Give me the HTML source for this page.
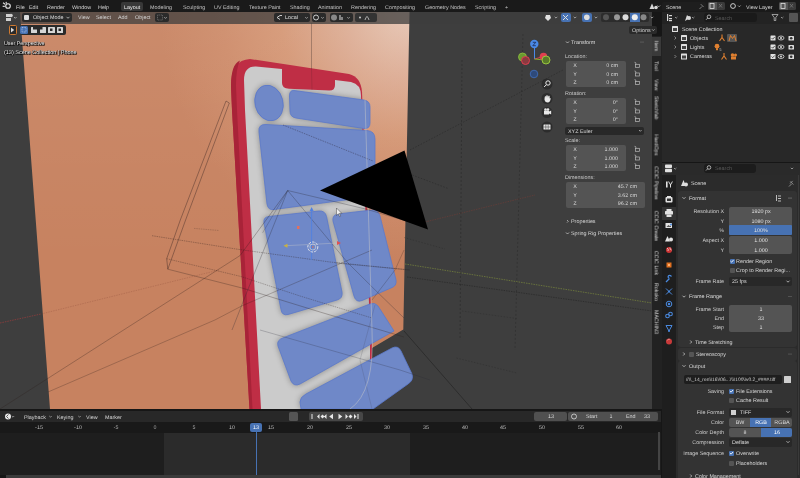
<!DOCTYPE html><html><head><meta charset="utf-8"><style>
html,body{margin:0;padding:0}
body{width:800px;height:478px;overflow:hidden;position:relative;background:#161616;font-family:"Liberation Sans",sans-serif}
.t{position:absolute;white-space:nowrap;line-height:1;will-change:transform;text-rendering:geometricPrecision}
.r{position:absolute}
svg{position:absolute;left:0;top:0}
.sh{text-shadow:0 0 1px #000,0 0 1px #000}
</style></head><body>
<div class="r" style="left:0px;top:0px;width:800px;height:12px;background:#1a1a1a;"></div>
<svg width="800" height="478" viewBox="0 0 800 478"><g fill="none" stroke="#e6e6e6" stroke-width="1.1"><circle cx="8" cy="6" r="2.3"/><path d="M5.2,4.2 L3,2.8 M4.8,6.4 L2.6,6.2 M6.5,3.6 L6,1.8"/></g></svg>
<div class="t" style="left:16px;top:8.7px;font-size:5.4px;color:#d4d4d4;transform:translate(0,-50%);">File</div>
<div class="t" style="left:29px;top:8.7px;font-size:5.4px;color:#d4d4d4;transform:translate(0,-50%);">Edit</div>
<div class="t" style="left:47px;top:8.7px;font-size:5.4px;color:#d4d4d4;transform:translate(0,-50%);">Render</div>
<div class="t" style="left:72px;top:8.7px;font-size:5.4px;color:#d4d4d4;transform:translate(0,-50%);">Window</div>
<div class="t" style="left:98px;top:8.7px;font-size:5.4px;color:#d4d4d4;transform:translate(0,-50%);">Help</div>
<div class="r" style="left:121px;top:1.5px;width:21.5px;height:9.5px;background:#383838;border-radius:2px;"></div>
<div class="t" style="left:124px;top:8.7px;font-size:5.4px;color:#ececec;transform:translate(0,-50%);">Layout</div>
<div class="t" style="left:150px;top:8.7px;font-size:5.4px;color:#c4c4c4;transform:translate(0,-50%);">Modeling</div>
<div class="t" style="left:182.5px;top:8.7px;font-size:5.4px;color:#c4c4c4;transform:translate(0,-50%);">Sculpting</div>
<div class="t" style="left:213.7px;top:8.7px;font-size:5.4px;color:#c4c4c4;transform:translate(0,-50%);">UV Editing</div>
<div class="t" style="left:248.7px;top:8.7px;font-size:5.4px;color:#c4c4c4;transform:translate(0,-50%);">Texture Paint</div>
<div class="t" style="left:290px;top:8.7px;font-size:5.4px;color:#c4c4c4;transform:translate(0,-50%);">Shading</div>
<div class="t" style="left:318px;top:8.7px;font-size:5.4px;color:#c4c4c4;transform:translate(0,-50%);">Animation</div>
<div class="t" style="left:351px;top:8.7px;font-size:5.4px;color:#c4c4c4;transform:translate(0,-50%);">Rendering</div>
<div class="t" style="left:385.3px;top:8.7px;font-size:5.4px;color:#c4c4c4;transform:translate(0,-50%);">Compositing</div>
<div class="t" style="left:425px;top:8.7px;font-size:5.4px;color:#c4c4c4;transform:translate(0,-50%);">Geometry Nodes</div>
<div class="t" style="left:474.6px;top:8.7px;font-size:5.4px;color:#c4c4c4;transform:translate(0,-50%);">Scripting</div>
<div class="t" style="left:504.5px;top:8.7px;font-size:5.4px;color:#c4c4c4;transform:translate(0,-50%);">+</div>
<svg width="800" height="478" viewBox="0 0 800 478"><g fill="#d8d8d8"><path d="M652,3.5 L654.5,9 L649.5,9 Z"/><circle cx="656" cy="7.5" r="1.8"/></g><path d="M657.5,5.5 l1.3,1.3 l1.3,-1.3" stroke="#ccc" fill="none" stroke-width="0.7"/></svg>
<div class="r" style="left:662px;top:1.5px;width:44px;height:9px;background:#1e1e1e;border-radius:2px;"></div>
<div class="t" style="left:666px;top:8.7px;font-size:5.4px;color:#d8d8d8;transform:translate(0,-50%);">Scene</div>
<svg width="800" height="478" viewBox="0 0 800 478"><path d="M699.5,9 l2.5,-2.5 m-1.2,-2.3 l2.8,2.8" stroke="#888" stroke-width="0.9" fill="none"/></svg>
<div class="r" style="left:708px;top:2px;width:8.5px;height:8px;background:#555;border-radius:1.5px 0 0 1.5px;"></div>
<div class="r" style="left:716.5px;top:2px;width:8.5px;height:8px;background:#3a3a3a;border-radius:0 1.5px 1.5px 0;"></div>
<svg width="800" height="478" viewBox="0 0 800 478"><rect x="710" y="3.5" width="4" height="5" fill="none" stroke="#e0e0e0" stroke-width="0.8"/><path d="M719,4 l3,3.5 m0,-3.5 l-3,3.5" stroke="#777" stroke-width="0.8"/></svg>
<svg width="800" height="478" viewBox="0 0 800 478"><g fill="none" stroke="#ddd" stroke-width="0.9"><circle cx="733" cy="6" r="2.4"/></g><path d="M738,5.5 l1.3,1.3 l1.3,-1.3" stroke="#ccc" fill="none" stroke-width="0.7"/></svg>
<div class="t" style="left:745.5px;top:8.7px;font-size:5.4px;color:#d8d8d8;transform:translate(0,-50%);">View Layer</div>
<div class="r" style="left:779px;top:2px;width:8.5px;height:8px;background:#555;border-radius:1.5px 0 0 1.5px;"></div>
<div class="r" style="left:787.5px;top:2px;width:8px;height:8px;background:#3a3a3a;border-radius:0 1.5px 1.5px 0;"></div>
<svg width="800" height="478" viewBox="0 0 800 478"><rect x="781" y="3.5" width="4" height="5" fill="none" stroke="#e0e0e0" stroke-width="0.8"/><path d="M790,4 l3,3.5 m0,-3.5 l-3,3.5" stroke="#777" stroke-width="0.8"/></svg>
<div class="r" style="left:0px;top:12px;width:652px;height:397px;background:#3e3e3e;"></div>
<svg width="800" height="478" viewBox="0 0 800 478"><defs><radialGradient id="og" gradientUnits="userSpaceOnUse" cx="410" cy="11" r="250"><stop offset="0" stop-color="#e6c6b4"/><stop offset="0.27" stop-color="#dcab92"/><stop offset="0.52" stop-color="#d49674"/><stop offset="0.75" stop-color="#cd8a68"/><stop offset="1" stop-color="#c78260"/></radialGradient><linearGradient id="ov" gradientUnits="userSpaceOnUse" x1="0" y1="20" x2="0" y2="260"><stop offset="0" stop-color="#fff" stop-opacity="0.07"/><stop offset="1" stop-color="#fff" stop-opacity="0"/></linearGradient><linearGradient id="wg" gradientUnits="userSpaceOnUse" x1="255" y1="120" x2="372" y2="360"><stop offset="0" stop-color="#d6d6d6"/><stop offset="0.5" stop-color="#c4c4c4"/><stop offset="1" stop-color="#a4a4a4"/></linearGradient></defs><polygon points="20,12 409.5,12 403.3,329.5 372,348 372,409 50,409" fill="url(#og)"/><polygon points="20,12 409.5,12 403.3,329.5 372,348 372,409 50,409" fill="url(#ov)"/><path d="M249.5,409 L232,110 L231,86 Q231,60 250,59 L349,74 Q361,77 362,92 L372,330 L372,409 Z" fill="#bf2e45"/><path d="M249.5,409 L232,110 L231,86 Q231,64 240,60.5 Q236,68 236,86 L237,110 L252.5,409 Z" fill="#a82338"/><defs><clipPath id="scr"><path d="M261,409 L245,110 L244,80 Q244,66 256,66.5 L282,69 L282,83 Q282,88.5 289,88.8 L329,90.5 Q335,90.8 335,85 L335,80 L351,82 Q361,84 361,96 L370,330 L370,409 Z"/></clipPath><filter id="blr" x="-20%" y="-20%" width="140%" height="140%"><feGaussianBlur stdDeviation="3.2"/></filter></defs><path d="M261,409 L245,110 L244,80 Q244,66 256,66.5 L282,69 L282,83 Q282,88.5 289,88.8 L329,90.5 Q335,90.8 335,85 L335,80 L351,82 Q361,84 361,96 L370,330 L370,409 Z" fill="#cbcbcb"/><g clip-path="url(#scr)"><g fill="#000" opacity="0.36" filter="url(#blr)"><ellipse cx="269" cy="103" rx="14" ry="18" transform="rotate(-14 269 103)"/><path d="M294,90.5 L364,100 Q370,101 370,107 L370,123 Q370,129 364,128.5 L296,118 Q290,117 290,111 L289.5,96 Q289.5,90 294,90.5 Z"/><path d="M266,124.5 L367,130.5 Q375,131 375,139 L375,196 L274,209.5 Q268,210.5 267,204 L259,132 Q258,124 266,124.5 Z"/><path d="M269,216.5 L319,211 Q325,210.5 326.5,216.5 L342,292 Q343,298.5 337,300 L288,314.5 Q282,316 281,309.5 L264,223 Q263,217 269,216.5 Z"/><path d="M338,214 L372,210 Q378,209.5 380,216 L396,280 Q397,286 391,288 L362,300.5 Q356,303 354,296 L333,221 Q332,215 338,214 Z"/><path d="M284,337.5 L370,304 Q375,302 378,306 L394,331 L300,384 Q294,387 291,381 L278,346 Q276,340 284,337.5 Z"/><path d="M306,394 L392,348 Q398,345 401,351 L412,374 Q414,380 408,384 L373,409 L301,409 L300,402 Q300,397 306,394 Z"/></g></g><g fill="#6f88c8" stroke="#5a78cc" stroke-width="0.8"><ellipse cx="269" cy="103" rx="14" ry="18" transform="rotate(-14 269 103)"/><path d="M294,90.5 L364,100 Q370,101 370,107 L370,123 Q370,129 364,128.5 L296,118 Q290,117 290,111 L289.5,96 Q289.5,90 294,90.5 Z"/><path d="M266,124.5 L367,130.5 Q375,131 375,139 L375,196 L274,209.5 Q268,210.5 267,204 L259,132 Q258,124 266,124.5 Z"/><path d="M269,216.5 L319,211 Q325,210.5 326.5,216.5 L342,292 Q343,298.5 337,300 L288,314.5 Q282,316 281,309.5 L264,223 Q263,217 269,216.5 Z"/><path d="M338,214 L372,210 Q378,209.5 380,216 L396,280 Q397,286 391,288 L362,300.5 Q356,303 354,296 L333,221 Q332,215 338,214 Z"/><path d="M284,337.5 L370,304 Q375,302 378,306 L394,331 L300,384 Q294,387 291,381 L278,346 Q276,340 284,337.5 Z"/><path d="M306,394 L392,348 Q398,345 401,351 L412,374 Q414,380 408,384 L373,409 L301,409 L300,402 Q300,397 306,394 Z"/></g><path d="M311.5,23 L311.5,69" stroke="rgba(40,30,30,0.5)" stroke-width="0.6" fill="none"/><path d="M311.5,69 L312,90" stroke="rgba(40,30,30,0.25)" stroke-width="0.6" fill="none"/><path d="M180.3,220 L166.7,258.7 L167.8,269.2 L185.6,220" stroke="rgba(45,30,28,0.55)" stroke-width="0.7" fill="none"/><path d="M226,101 L180.3,220" stroke="rgba(45,30,28,0.55)" stroke-width="0.7" fill="none"/><path d="M229.3,103 L185.6,220" stroke="rgba(45,30,28,0.55)" stroke-width="0.7" fill="none"/><path d="M226,101 L229.3,103" stroke="rgba(45,30,28,0.55)" stroke-width="0.7" fill="none"/><path d="M166.7,258.7 L241,276.5 L300,296 L372,318" stroke="rgba(45,30,28,0.5)" stroke-width="0.6" fill="none" stroke-dasharray="1.5,0.8"/><path d="M167.8,269.2 L242,288 L320,312 L404,337" stroke="rgba(45,30,28,0.5)" stroke-width="0.6" fill="none"/><path d="M152,235.7 L238,249.3 L330,262 L410,270" stroke="rgba(45,30,28,0.55)" stroke-width="0.6" fill="none" stroke-dasharray="1.5,0.8"/><path d="M194,228.4 L219,230.5" stroke="rgba(45,30,28,0.35)" stroke-width="0.6" fill="none" stroke-dasharray="1.5,0.8"/><path d="M0,409 L240,255.6 L287.7,190.5" stroke="rgba(45,30,28,0.5)" stroke-width="0.6" fill="none"/><path d="M214.9,320 L242,305.8 L372,250" stroke="rgba(45,30,28,0.45)" stroke-width="0.6" fill="none"/><path d="M48,392 L214.9,320" stroke="rgba(45,30,28,0.45)" stroke-width="0.6" fill="none"/><path d="M287.7,190.5 L247.5,290.5 L232,330" stroke="rgba(40,40,50,0.5)" stroke-width="0.6" fill="none"/><path d="M287.7,190.5 L348,263 L375.7,290.5 L404,318" stroke="rgba(40,40,50,0.5)" stroke-width="0.6" fill="none"/><path d="M287.7,190.5 L365.6,209 L410,222" stroke="rgba(40,40,50,0.5)" stroke-width="0.6" fill="none"/><path d="M262.6,232.8 L287.7,190.5" stroke="rgba(40,40,50,0.4)" stroke-width="0.6" fill="none"/><path d="M335.5,263 L410,270" stroke="rgba(40,40,50,0.4)" stroke-width="0.6" fill="none"/><path d="M283,125 L373,161" stroke="rgba(45,40,60,0.5)" stroke-width="0.8" fill="none" stroke-dasharray="1.5,1"/><path d="M0,323 L41,314" stroke="rgba(200,60,60,0.6)" stroke-width="0.8" fill="none" stroke-dasharray="1.5,1"/><path d="M41,314 L219,270" stroke="rgba(110,50,40,0.35)" stroke-width="0.6" fill="none" stroke-dasharray="1.5,1"/><path d="M425,222 L535,195" stroke="rgba(150,60,50,0.5)" stroke-width="0.7" fill="none" stroke-dasharray="1.5,1"/><path d="M405,264 L652,303" stroke="rgba(150,170,60,0.6)" stroke-width="0.8" fill="none" stroke-dasharray="1.5,1"/><path d="M407,277 L652,311" stroke="rgba(20,20,20,0.55)" stroke-width="0.7" fill="none" stroke-dasharray="1.5,1"/><path d="M462,60 L460,340" stroke="rgba(25,25,25,0.5)" stroke-width="0.7" fill="none" stroke-dasharray="2,2"/><path d="M523,34 L515,350" stroke="rgba(25,25,25,0.4)" stroke-width="0.7" fill="none" stroke-dasharray="2,2"/><path d="M410,150 L563,70" stroke="rgba(25,25,25,0.5)" stroke-width="0.7" fill="none" stroke-dasharray="1.5,1.5"/><path d="M409.6,174 L448,188.5" stroke="rgba(25,25,25,0.5)" stroke-width="0.7" fill="none" stroke-dasharray="1.5,1.5"/><path d="M404,331 L472,409" stroke="rgba(25,25,25,0.6)" stroke-width="0.8" fill="none"/><path d="M404,237.5 L445,249" stroke="rgba(25,25,25,0.4)" stroke-width="0.6" fill="none" stroke-dasharray="1.5,1.5"/><path d="M456.5,358 L516.8,373" stroke="rgba(25,25,25,0.4)" stroke-width="0.6" fill="none" stroke-dasharray="1.5,1.5"/><path d="M462,311 L516.8,318.5" stroke="rgba(25,25,25,0.35)" stroke-width="0.6" fill="none" stroke-dasharray="1.5,1.5"/><path d="M260,330 L400,370 L430,380" stroke="rgba(40,40,50,0.4)" stroke-width="0.6" fill="none"/><path d="M372,300 L395,270 L404,250" stroke="rgba(40,30,30,0.4)" stroke-width="0.6" fill="none"/><path d="M375,305 L360,360 L372,409" stroke="rgba(60,60,80,0.3)" stroke-width="0.6" fill="none"/><path d="M365,100 L372,330 Q375,392 350,409" stroke="#c8c8c8" stroke-width="0.7" fill="none" opacity="0.7"/><polygon points="320,190.5 404.5,150.5 428,229.5" fill="#000"/></svg>
<svg width="800" height="478" viewBox="0 0 800 478"><g><line x1="534.5" y1="59" x2="534.5" y2="47" stroke="#4a8ae8" stroke-width="1"/><line x1="534.5" y1="59" x2="542" y2="57" stroke="#e04050" stroke-width="1"/><line x1="534.5" y1="59" x2="545" y2="60" stroke="#80b030" stroke-width="1"/><circle cx="522.5" cy="57" r="4" fill="#6a9a30" stroke="#90c040" stroke-width="0.8"/><circle cx="525.5" cy="60.5" r="4" fill="#8a3a40" stroke="#e04050" stroke-width="1"/><circle cx="543.5" cy="56.5" r="3.8" fill="#e04050"/><circle cx="546" cy="60" r="4" fill="#5a7a2a" stroke="#a0d040" stroke-width="0.9"/><circle cx="534" cy="74" r="3.8" fill="#2e4a7a" stroke="#4070c0" stroke-width="0.8"/><circle cx="534.3" cy="44" r="4.2" fill="#4a8ae8"/><path d="M532.8,42.3 h3 l-3,3.4 h3" stroke="#1a2a50" stroke-width="0.8" fill="none"/></g></svg>
<svg width="800" height="478" viewBox="0 0 800 478"><circle cx="547" cy="84" r="5.5" fill="rgba(30,30,30,0.55)"/></svg>
<svg width="800" height="478" viewBox="0 0 800 478"><circle cx="547" cy="98.5" r="5.5" fill="rgba(30,30,30,0.55)"/></svg>
<svg width="800" height="478" viewBox="0 0 800 478"><circle cx="547" cy="112.5" r="5.5" fill="rgba(30,30,30,0.55)"/></svg>
<svg width="800" height="478" viewBox="0 0 800 478"><circle cx="547" cy="127" r="5.5" fill="rgba(30,30,30,0.55)"/></svg>
<svg width="800" height="478" viewBox="0 0 800 478"><g stroke="#e8e8e8" fill="none" stroke-width="1"><circle cx="548" cy="83" r="2.2"/><path d="M546.3,84.8 l-2.2,2.2"/></g></svg>
<svg width="800" height="478" viewBox="0 0 800 478"><path d="M544.5,100 q0,-4 1,-4 q0.5,0 0.5,2 q0,-3 1,-3 q1,0 1,3 q0,-2.5 1,-2.5 q1,0 0.7,3 q0.5,-1 1,0 q-0.5,4 -3,4 q-2.5,0 -3.2,-2.5z" fill="#e8e8e8"/></svg>
<svg width="800" height="478" viewBox="0 0 800 478"><g fill="#e8e8e8"><rect x="544" y="110.5" width="5" height="4" rx="0.6"/><circle cx="545.5" cy="109.5" r="1.3"/><circle cx="548" cy="109.5" r="1.3"/><path d="M549,111.5 l2.2,-1 v4 l-2.2,-1z"/></g></svg>
<svg width="800" height="478" viewBox="0 0 800 478"><g fill="#e8e8e8"><rect x="543.5" y="124.5" width="7" height="5" rx="0.5"/></g><g stroke="#333" stroke-width="0.5"><line x1="545.8" y1="124.5" x2="545.8" y2="129.5"/><line x1="548.2" y1="124.5" x2="548.2" y2="129.5"/><line x1="543.5" y1="127" x2="550.5" y2="127"/></g></svg>
<svg width="800" height="478" viewBox="0 0 800 478"><g><line x1="311.6" y1="210" x2="311.6" y2="260" stroke="#5080e0" stroke-width="0.9"/><line x1="286" y1="245.7" x2="338" y2="243" stroke="rgba(200,200,200,0.55)" stroke-width="0.7"/><path d="M311.6,207 l-2,4 h4z" fill="#5080e0"/><path d="M283.5,245.8 l4,-2 v4z" fill="#c8b040"/><path d="M341,243 l-4,-2 v4z" fill="#e05050"/><rect x="297" y="226" width="2.5" height="3" fill="#e07060"/><circle cx="312.8" cy="247" r="5" fill="none" stroke="#eee" stroke-width="0.9" stroke-dasharray="2.5,1.2"/><circle cx="312.8" cy="247" r="3" fill="none" stroke="#ddd" stroke-width="0.6"/><circle cx="312.8" cy="247" r="0.8" fill="#e07050"/></g></svg>
<svg width="800" height="478" viewBox="0 0 800 478"><path d="M336.5,208 v7.5 l1.8,-1.7 l1.3,2.8 l1,-0.5 l-1.3,-2.7 h2.5z" fill="#f0f0f0" stroke="#222" stroke-width="0.4"/></svg>
<div class="r" style="left:0px;top:12px;width:652px;height:12px;background:rgba(62,62,62,0.75);"></div>
<svg width="800" height="478" viewBox="0 0 800 478"><g fill="#d0d0d0"><rect x="6" y="14" width="4" height="3"/><circle cx="11" cy="15.5" r="1.8"/><rect x="6" y="18" width="5" height="3"/></g><path d="M14,17 l1.3,1.3 l1.3,-1.3" stroke="#ccc" fill="none" stroke-width="0.7"/></svg>
<div class="r" style="left:21.5px;top:12.5px;width:50px;height:9.5px;background:#2a2a2a;border-radius:2px;"></div>
<div class="r" style="left:24px;top:14.5px;width:5px;height:5px;background:#dcdcdc;border-radius:1px;"></div>
<div class="t" style="left:32.5px;top:19.4px;font-size:5.4px;color:#dedede;transform:translate(0,-50%);">Object Mode</div>
<svg width="800" height="478" viewBox="0 0 800 478"><path d="M66.5,16.8 l1.5,1.5 l1.5,-1.5" stroke="#ccc" fill="none" stroke-width="0.8"/></svg>
<div class="t" style="left:77.6px;top:19.4px;font-size:5.4px;color:#d6d6d6;transform:translate(0,-50%);">View</div>
<div class="t" style="left:96.3px;top:19.4px;font-size:5.4px;color:#d6d6d6;transform:translate(0,-50%);">Select</div>
<div class="t" style="left:118.4px;top:19.4px;font-size:5.4px;color:#d6d6d6;transform:translate(0,-50%);">Add</div>
<div class="t" style="left:135px;top:19.4px;font-size:5.4px;color:#d6d6d6;transform:translate(0,-50%);">Object</div>
<div class="r" style="left:155px;top:12.5px;width:13.5px;height:9.5px;background:#2a2a2a;border-radius:2px;"></div>
<div class="r" style="left:274px;top:12.5px;width:35.5px;height:9.5px;background:#2a2a2a;border-radius:2px;"></div>
<svg width="800" height="478" viewBox="0 0 800 478"><g stroke="#ddd" stroke-width="0.9" fill="none"><path d="M277,17.5 l3,-2 m-3,2 l3,2 M280,15.5 l2,0"/></g></svg>
<div class="t" style="left:284.5px;top:19.4px;font-size:5.4px;color:#e0e0e0;transform:translate(0,-50%);">Local</div>
<div class="r" style="left:311.5px;top:12.5px;width:14.5px;height:9.5px;background:#2a2a2a;border-radius:2px;"></div>
<svg width="800" height="478" viewBox="0 0 800 478"><circle cx="316" cy="17.5" r="2.5" stroke="#ddd" stroke-width="0.9" fill="none"/></svg>
<div class="r" style="left:329.5px;top:12.5px;width:23px;height:9.5px;background:#2a2a2a;border-radius:2px;"></div>
<svg width="800" height="478" viewBox="0 0 800 478"><circle cx="334" cy="17.5" r="3" fill="#888"/><path d="M340,20 l0,-5 m2,5 l0,-3" stroke="#ddd" stroke-width="1"/></svg>
<div class="r" style="left:355px;top:12.5px;width:22px;height:9.5px;background:#333;border-radius:2px;"></div>
<svg width="800" height="478" viewBox="0 0 800 478"><path d="M305.3,17.2 l1.2,1.2 l1.2,-1.2" stroke="#ccc" fill="none" stroke-width="0.7"/></svg>
<svg width="800" height="478" viewBox="0 0 800 478"><path d="M321.3,17.2 l1.2,1.2 l1.2,-1.2" stroke="#ccc" fill="none" stroke-width="0.7"/></svg>
<svg width="800" height="478" viewBox="0 0 800 478"><path d="M347.3,17.2 l1.2,1.2 l1.2,-1.2" stroke="#ccc" fill="none" stroke-width="0.7"/></svg>
<svg width="800" height="478" viewBox="0 0 800 478"><path d="M164.3,17.2 l1.2,1.2 l1.2,-1.2" stroke="#ccc" fill="none" stroke-width="0.7"/></svg>
<svg width="800" height="478" viewBox="0 0 800 478"><rect x="157.5" y="15" width="5" height="5" fill="none" stroke="#888" stroke-width="0.6" stroke-dasharray="1,0.7"/></svg>
<svg width="800" height="478" viewBox="0 0 800 478"><circle cx="360" cy="17.5" r="1" fill="#ccc"/><path d="M365,20 q2,-7 4,0" stroke="#ccc" stroke-width="0.8" fill="none"/></svg>
<svg width="800" height="478" viewBox="0 0 800 478"><g fill="#e0e0e0"><path d="M546,15 l4,0 l1,3 l-3,3 l-3,-3 z"/></g></svg>
<div class="r" style="left:561px;top:12.5px;width:9.5px;height:9.5px;background:#4772b3;border-radius:2px;"></div>
<svg width="800" height="478" viewBox="0 0 800 478"><path d="M563,20 l5,-5 m-5,0 l5,5" stroke="#ddd" stroke-width="1"/></svg>
<div class="r" style="left:582px;top:12.5px;width:9.5px;height:9.5px;background:#4772b3;border-radius:2px;"></div>
<svg width="800" height="478" viewBox="0 0 800 478"><circle cx="586.8" cy="17.3" r="2.8" fill="#ddd"/></svg>
<svg width="800" height="478" viewBox="0 0 800 478"><path d="M554.7,16.8 l1.3,1.3 l1.3,-1.3" stroke="#ccc" fill="none" stroke-width="0.7"/></svg>
<svg width="800" height="478" viewBox="0 0 800 478"><path d="M573.7,16.8 l1.3,1.3 l1.3,-1.3" stroke="#ccc" fill="none" stroke-width="0.7"/></svg>
<svg width="800" height="478" viewBox="0 0 800 478"><path d="M594.7,16.8 l1.3,1.3 l1.3,-1.3" stroke="#ccc" fill="none" stroke-width="0.7"/></svg>
<svg width="800" height="478" viewBox="0 0 800 478"><path d="M650.7,16.8 l1.3,1.3 l1.3,-1.3" stroke="#ccc" fill="none" stroke-width="0.7"/></svg>
<div class="r" style="left:601px;top:12.5px;width:48px;height:9.5px;background:#2c2c2c;border-radius:2px;"></div>
<svg width="800" height="478" viewBox="0 0 800 478"><circle cx="606" cy="17.3" r="3" fill="#555"/><circle cx="617" cy="17.3" r="3" fill="#999"/><circle cx="625.5" cy="17.3" r="3" fill="#ddd"/></svg>
<div class="r" style="left:630px;top:12.5px;width:9.5px;height:9.5px;background:#4772b3;"></div>
<svg width="800" height="478" viewBox="0 0 800 478"><circle cx="634.8" cy="17.3" r="3" fill="#eee"/><circle cx="643.5" cy="17.3" r="3" fill="#888"/></svg>
<div class="r" style="left:8.5px;top:25px;width:8px;height:9.5px;background:#2a2a2a;border:1px solid #d07a30;border-radius:1.5px;box-sizing:border-box;"></div>
<svg width="800" height="478" viewBox="0 0 800 478"><path d="M11,27.5 l0,5 l3.2,-2.5 z" fill="#ddd"/></svg>
<div class="r" style="left:19.5px;top:25px;width:46px;height:9.5px;background:#2a2a2a;border-radius:2px;"></div>
<div class="r" style="left:20px;top:25.5px;width:8px;height:8.5px;background:#4772b3;border-radius:1.5px;"></div>
<svg width="800" height="478" viewBox="0 0 800 478"><rect x="22" y="27.5" width="4" height="4.5" fill="none" stroke="#cfd8f0" stroke-width="0.6" stroke-dasharray="1,0.6"/></svg>
<div class="r" style="left:30.5px;top:26.5px;width:6.5px;height:6.5px;background:#d6d6d6;border-radius:0.5px;"></div>
<div class="r" style="left:39.5px;top:26.5px;width:6.5px;height:6.5px;background:#d6d6d6;border-radius:0.5px;"></div>
<div class="r" style="left:48px;top:26.5px;width:6.5px;height:6.5px;background:#d6d6d6;border-radius:0.5px;"></div>
<div class="r" style="left:56.5px;top:26.5px;width:6.5px;height:6.5px;background:#d6d6d6;border-radius:0.5px;"></div>
<svg width="800" height="478" viewBox="0 0 800 478"><g fill="#2a2a2a"><rect x="33" y="26.5" width="4" height="3"/><rect x="39.5" y="26.5" width="3" height="3"/><rect x="50" y="28.5" width="2.5" height="2.5"/><rect x="58.5" y="28.5" width="2.5" height="2.5"/></g></svg>
<div class="t" style="left:4.4px;top:45.199999999999996px;font-size:5.33px;color:#f8f8f8;transform:translate(0,-50%);text-shadow:0.7px 0.7px 0.4px #000,-0.5px -0.3px 0.4px #000,0.5px -0.4px 0.4px #222,-0.4px 0.6px 0.4px #222;">User Perspective</div>
<div class="t" style="left:4.4px;top:53.5px;font-size:5.47px;color:#f8f8f8;transform:translate(0,-50%);text-shadow:0.7px 0.7px 0.4px #000,-0.5px -0.3px 0.4px #000,0.5px -0.4px 0.4px #222,-0.4px 0.6px 0.4px #222;">(13) Scene Collection | Phone</div>
<div class="r" style="left:628.5px;top:25.8px;width:28.5px;height:8.5px;background:#2a2a2a;border-radius:2px;"></div>
<div class="t" style="left:631.5px;top:31.9px;font-size:5.4px;color:#d8d8d8;transform:translate(0,-50%);">Options</div>
<svg width="800" height="478" viewBox="0 0 800 478"><path d="M652,29.3 l1.3,1.3 l1.3,-1.3" stroke="#ccc" fill="none" stroke-width="0.7"/></svg>
<svg width="800" height="478" viewBox="0 0 800 478"><path d="M566,41.5 l1.5,1.5 l1.5,-1.5" stroke="#ccc" fill="none" stroke-width="0.8"/></svg>
<div class="t" style="left:571px;top:44.199999999999996px;font-size:5.4px;color:#dcdcdc;transform:translate(0,-50%);">Transform</div>
<svg width="800" height="478" viewBox="0 0 800 478"><g fill="#888"><circle cx="641" cy="42" r="0.5"/><circle cx="643" cy="42" r="0.5"/></g></svg>
<div class="t" style="left:565px;top:57.6px;font-size:5.4px;color:#c8c8c8;transform:translate(0,-50%);">Location:</div>
<div class="r" style="left:565.5px;top:61px;width:60px;height:25.799999999999997px;background:#545454;border-radius:2px;"></div>
<div class="t" style="left:574.5px;top:67.2px;font-size:5.4px;color:#d8d8d8;transform:translate(-50%,-50%);">X</div>
<div class="t" style="left:618px;top:67.2px;font-size:5.4px;color:#dcdcdc;transform:translate(-100%,-50%);">0 cm</div>
<div class="t" style="left:574.5px;top:75.8px;font-size:5.4px;color:#d8d8d8;transform:translate(-50%,-50%);">Y</div>
<div class="t" style="left:618px;top:75.8px;font-size:5.4px;color:#dcdcdc;transform:translate(-100%,-50%);">0 cm</div>
<div class="t" style="left:574.5px;top:84.4px;font-size:5.4px;color:#d8d8d8;transform:translate(-50%,-50%);">Z</div>
<div class="t" style="left:618px;top:84.4px;font-size:5.4px;color:#dcdcdc;transform:translate(-100%,-50%);">0 cm</div>
<div class="t" style="left:565px;top:94.9px;font-size:5.4px;color:#c8c8c8;transform:translate(0,-50%);">Rotation:</div>
<div class="r" style="left:565.5px;top:98px;width:60px;height:25.799999999999997px;background:#545454;border-radius:2px;"></div>
<div class="t" style="left:574.5px;top:104.2px;font-size:5.4px;color:#d8d8d8;transform:translate(-50%,-50%);">X</div>
<div class="t" style="left:618px;top:104.2px;font-size:5.4px;color:#dcdcdc;transform:translate(-100%,-50%);">0°</div>
<div class="t" style="left:574.5px;top:112.8px;font-size:5.4px;color:#d8d8d8;transform:translate(-50%,-50%);">Y</div>
<div class="t" style="left:618px;top:112.8px;font-size:5.4px;color:#dcdcdc;transform:translate(-100%,-50%);">0°</div>
<div class="t" style="left:574.5px;top:121.4px;font-size:5.4px;color:#d8d8d8;transform:translate(-50%,-50%);">Z</div>
<div class="t" style="left:618px;top:121.4px;font-size:5.4px;color:#dcdcdc;transform:translate(-100%,-50%);">0°</div>
<div class="r" style="left:565px;top:127px;width:79px;height:7.5px;background:#282828;border-radius:2px;"></div>
<div class="t" style="left:568px;top:132.6px;font-size:5.4px;color:#d8d8d8;transform:translate(0,-50%);">XYZ Euler</div>
<svg width="800" height="478" viewBox="0 0 800 478"><path d="M639,130 l1.3,1.3 l1.3,-1.3" stroke="#ccc" fill="none" stroke-width="0.7"/></svg>
<div class="t" style="left:565px;top:141.9px;font-size:5.4px;color:#c8c8c8;transform:translate(0,-50%);">Scale:</div>
<div class="r" style="left:565.5px;top:145px;width:60px;height:25.799999999999997px;background:#545454;border-radius:2px;"></div>
<div class="t" style="left:574.5px;top:151.20000000000002px;font-size:5.4px;color:#d8d8d8;transform:translate(-50%,-50%);">X</div>
<div class="t" style="left:618px;top:151.20000000000002px;font-size:5.4px;color:#dcdcdc;transform:translate(-100%,-50%);">1.000</div>
<div class="t" style="left:574.5px;top:159.8px;font-size:5.4px;color:#d8d8d8;transform:translate(-50%,-50%);">Y</div>
<div class="t" style="left:618px;top:159.8px;font-size:5.4px;color:#dcdcdc;transform:translate(-100%,-50%);">1.000</div>
<div class="t" style="left:574.5px;top:168.4px;font-size:5.4px;color:#d8d8d8;transform:translate(-50%,-50%);">Z</div>
<div class="t" style="left:618px;top:168.4px;font-size:5.4px;color:#dcdcdc;transform:translate(-100%,-50%);">1.000</div>
<div class="t" style="left:565px;top:178.9px;font-size:5.4px;color:#c8c8c8;transform:translate(0,-50%);">Dimensions:</div>
<div class="r" style="left:565.5px;top:182px;width:79px;height:25.799999999999997px;background:#545454;border-radius:2px;"></div>
<div class="t" style="left:574.5px;top:188.20000000000002px;font-size:5.4px;color:#d8d8d8;transform:translate(-50%,-50%);">X</div>
<div class="t" style="left:637px;top:188.20000000000002px;font-size:5.4px;color:#dcdcdc;transform:translate(-100%,-50%);">45.7 cm</div>
<div class="t" style="left:574.5px;top:196.8px;font-size:5.4px;color:#d8d8d8;transform:translate(-50%,-50%);">Y</div>
<div class="t" style="left:637px;top:196.8px;font-size:5.4px;color:#dcdcdc;transform:translate(-100%,-50%);">3.62 cm</div>
<div class="t" style="left:574.5px;top:205.4px;font-size:5.4px;color:#d8d8d8;transform:translate(-50%,-50%);">Z</div>
<div class="t" style="left:637px;top:205.4px;font-size:5.4px;color:#dcdcdc;transform:translate(-100%,-50%);">96.2 cm</div>
<svg width="800" height="478" viewBox="0 0 800 478"><g stroke="#bbb" stroke-width="0.7" fill="none"><rect x="635.5" y="64.3" width="4" height="3"/><path d="M636,64.3 q0,-2.5 -1.5,-2"/></g></svg>
<svg width="800" height="478" viewBox="0 0 800 478"><g stroke="#bbb" stroke-width="0.7" fill="none"><rect x="635.5" y="73" width="4" height="3"/><path d="M636,73 q0,-2.5 -1.5,-2"/></g></svg>
<svg width="800" height="478" viewBox="0 0 800 478"><g stroke="#bbb" stroke-width="0.7" fill="none"><rect x="635.5" y="81.6" width="4" height="3"/><path d="M636,81.6 q0,-2.5 -1.5,-2"/></g></svg>
<svg width="800" height="478" viewBox="0 0 800 478"><g stroke="#bbb" stroke-width="0.7" fill="none"><rect x="635.5" y="101.3" width="4" height="3"/><path d="M636,101.3 q0,-2.5 -1.5,-2"/></g></svg>
<svg width="800" height="478" viewBox="0 0 800 478"><g stroke="#bbb" stroke-width="0.7" fill="none"><rect x="635.5" y="110" width="4" height="3"/><path d="M636,110 q0,-2.5 -1.5,-2"/></g></svg>
<svg width="800" height="478" viewBox="0 0 800 478"><g stroke="#bbb" stroke-width="0.7" fill="none"><rect x="635.5" y="118.6" width="4" height="3"/><path d="M636,118.6 q0,-2.5 -1.5,-2"/></g></svg>
<svg width="800" height="478" viewBox="0 0 800 478"><g stroke="#bbb" stroke-width="0.7" fill="none"><rect x="635.5" y="148.3" width="4" height="3"/><path d="M636,148.3 q0,-2.5 -1.5,-2"/></g></svg>
<svg width="800" height="478" viewBox="0 0 800 478"><g stroke="#bbb" stroke-width="0.7" fill="none"><rect x="635.5" y="157" width="4" height="3"/><path d="M636,157 q0,-2.5 -1.5,-2"/></g></svg>
<svg width="800" height="478" viewBox="0 0 800 478"><g stroke="#bbb" stroke-width="0.7" fill="none"><rect x="635.5" y="165.6" width="4" height="3"/><path d="M636,165.6 q0,-2.5 -1.5,-2"/></g></svg>
<svg width="800" height="478" viewBox="0 0 800 478"><path d="M567,220 l1.3,1.3 l-1.3,1.3" stroke="#ccc" fill="none" stroke-width="0.7"/></svg>
<div class="t" style="left:571px;top:223.4px;font-size:5.4px;color:#d8d8d8;transform:translate(0,-50%);">Properties</div>
<svg width="800" height="478" viewBox="0 0 800 478"><path d="M566,232.5 l1.5,1.5 l1.5,-1.5" stroke="#ccc" fill="none" stroke-width="0.8"/></svg>
<div class="t" style="left:571px;top:235.4px;font-size:5.4px;color:#d8d8d8;transform:translate(0,-50%);">Spring Rig Properties</div>
<div class="r" style="left:652px;top:36px;width:9.5px;height:373px;background:#222222;"></div>
<div class="r" style="left:652px;top:36.7px;width:9px;height:19.5px;background:#3a3a3a;"></div>
<div class="t" style="left:655px;top:46.0px;font-size:5.3px;color:#dcdcdc;transform:translate(-50%,-50%) rotate(90deg)">Item</div>
<div class="t" style="left:655px;top:65.6px;font-size:5.3px;color:#dcdcdc;transform:translate(-50%,-50%) rotate(90deg)">Tool</div>
<div class="t" style="left:655px;top:85.0px;font-size:5.3px;color:#dcdcdc;transform:translate(-50%,-50%) rotate(90deg)">View</div>
<div class="t" style="left:655px;top:108.0px;font-size:5.3px;color:#dcdcdc;transform:translate(-50%,-50%) rotate(90deg)">Sketchfab</div>
<div class="t" style="left:655px;top:144.6px;font-size:5.3px;color:#dcdcdc;transform:translate(-50%,-50%) rotate(90deg)">HardOps</div>
<div class="t" style="left:655px;top:183.0px;font-size:5.3px;color:#dcdcdc;transform:translate(-50%,-50%) rotate(90deg)">CCIC Pipeline</div>
<div class="t" style="left:655px;top:226.0px;font-size:5.3px;color:#dcdcdc;transform:translate(-50%,-50%) rotate(90deg)">CCIC Create</div>
<div class="t" style="left:655px;top:262.5px;font-size:5.3px;color:#dcdcdc;transform:translate(-50%,-50%) rotate(90deg)">CCIC Link</div>
<div class="t" style="left:655px;top:291.5px;font-size:5.3px;color:#dcdcdc;transform:translate(-50%,-50%) rotate(90deg)">Rokoko</div>
<div class="t" style="left:655px;top:322.0px;font-size:5.3px;color:#dcdcdc;transform:translate(-50%,-50%) rotate(90deg)">MACHIN3</div>
<div class="r" style="left:0px;top:409px;width:661px;height:69px;background:#161616;"></div>
<div class="r" style="left:0px;top:411px;width:661px;height:11px;background:#282828;"></div>
<div class="r" style="left:0px;top:422px;width:661px;height:10.5px;background:#191919;"></div>
<div class="r" style="left:0px;top:432.5px;width:661px;height:42px;background:#1e1e1e;"></div>
<div class="r" style="left:164px;top:432.5px;width:246px;height:42px;background:#2b2b2b;"></div>
<div class="r" style="left:6px;top:474.5px;width:655px;height:3.5px;background:#3b3b3b;"></div>
<svg width="800" height="478" viewBox="0 0 800 478"><circle cx="8" cy="416.5" r="3" fill="#e6e6e6"/><path d="M8.5,414.5 l-2,2 l2,2" stroke="#333" stroke-width="0.8" fill="none"/></svg>
<div class="t" style="left:24px;top:418.9px;font-size:5.4px;color:#d6d6d6;transform:translate(0,-50%);">Playback</div>
<div class="t" style="left:57px;top:418.9px;font-size:5.4px;color:#d6d6d6;transform:translate(0,-50%);">Keying</div>
<div class="t" style="left:86px;top:418.9px;font-size:5.4px;color:#d6d6d6;transform:translate(0,-50%);">View</div>
<div class="t" style="left:105px;top:418.9px;font-size:5.4px;color:#d6d6d6;transform:translate(0,-50%);">Marker</div>
<svg width="800" height="478" viewBox="0 0 800 478"><path d="M11.8,416 l1.2,1.2 l1.2,-1.2" stroke="#bbb" fill="none" stroke-width="0.7"/></svg>
<svg width="800" height="478" viewBox="0 0 800 478"><path d="M49.3,416 l1.2,1.2 l1.2,-1.2" stroke="#bbb" fill="none" stroke-width="0.7"/></svg>
<svg width="800" height="478" viewBox="0 0 800 478"><path d="M78.3,416 l1.2,1.2 l1.2,-1.2" stroke="#bbb" fill="none" stroke-width="0.7"/></svg>
<div class="r" style="left:289px;top:412px;width:9px;height:9px;background:#555;border-radius:1.5px;"></div>
<div class="r" style="left:308.5px;top:412px;width:54px;height:9px;background:#474747;border-radius:2px;"></div>
<svg width="800" height="478" viewBox="0 0 800 478"><g fill="#e8e8e8"><rect x="311.5" y="414" width="1" height="5"/><path d="M317,416.5 l2.5,-2.5 v5z"/><path d="M320.5,416.5 l2,-2 l2,2 l-2,2z M326.5,414 l-2.5,2.5 l2.5,2.5z"/><path d="M333,413.8 l-3.8,2.7 l3.8,2.7z"/><path d="M338.5,413.8 l3.8,2.7 l-3.8,2.7z"/><path d="M345.5,414 l2.5,2.5 l-2.5,2.5z M348.5,416.5 l2,-2 l2,2 l-2,2z"/><path d="M354,414 l2.5,2.5 l-2.5,2.5z"/><rect x="357.5" y="414" width="1" height="5"/></g></svg>
<div class="r" style="left:534px;top:412px;width:33px;height:8.6px;background:#505050;border-radius:2px;"></div>
<div class="t" style="left:550.5px;top:418.2px;font-size:5.4px;color:#dddddd;transform:translate(-50%,-50%);">13</div>
<div class="r" style="left:568px;top:412px;width:90px;height:8.6px;background:#505050;border-radius:2px;"></div>
<svg width="800" height="478" viewBox="0 0 800 478"><circle cx="574" cy="416.5" r="2.5" stroke="#ddd" stroke-width="0.8" fill="none"/></svg>
<div class="t" style="left:586px;top:418.2px;font-size:5.4px;color:#d8d8d8;transform:translate(0,-50%);">Start</div>
<div class="t" style="left:610.5px;top:418.2px;font-size:5.4px;color:#dddddd;transform:translate(-50%,-50%);">1</div>
<div class="t" style="left:626px;top:418.2px;font-size:5.4px;color:#d8d8d8;transform:translate(0,-50%);">End</div>
<div class="t" style="left:647px;top:418.2px;font-size:5.4px;color:#dddddd;transform:translate(-50%,-50%);">33</div>
<div class="t" style="left:38.89999999999999px;top:429.4px;font-size:5.4px;color:#bdbdbd;transform:translate(-50%,-50%);">-15</div>
<div class="t" style="left:77.6px;top:429.4px;font-size:5.4px;color:#bdbdbd;transform:translate(-50%,-50%);">-10</div>
<div class="t" style="left:116.3px;top:429.4px;font-size:5.4px;color:#bdbdbd;transform:translate(-50%,-50%);">-5</div>
<div class="t" style="left:155.0px;top:429.4px;font-size:5.4px;color:#bdbdbd;transform:translate(-50%,-50%);">0</div>
<div class="t" style="left:193.7px;top:429.4px;font-size:5.4px;color:#bdbdbd;transform:translate(-50%,-50%);">5</div>
<div class="t" style="left:232.4px;top:429.4px;font-size:5.4px;color:#bdbdbd;transform:translate(-50%,-50%);">10</div>
<div class="t" style="left:271.1px;top:429.4px;font-size:5.4px;color:#bdbdbd;transform:translate(-50%,-50%);">15</div>
<div class="t" style="left:309.8px;top:429.4px;font-size:5.4px;color:#bdbdbd;transform:translate(-50%,-50%);">20</div>
<div class="t" style="left:348.5px;top:429.4px;font-size:5.4px;color:#bdbdbd;transform:translate(-50%,-50%);">25</div>
<div class="t" style="left:387.20000000000005px;top:429.4px;font-size:5.4px;color:#bdbdbd;transform:translate(-50%,-50%);">30</div>
<div class="t" style="left:425.90000000000003px;top:429.4px;font-size:5.4px;color:#bdbdbd;transform:translate(-50%,-50%);">35</div>
<div class="t" style="left:464.6px;top:429.4px;font-size:5.4px;color:#bdbdbd;transform:translate(-50%,-50%);">40</div>
<div class="t" style="left:503.3px;top:429.4px;font-size:5.4px;color:#bdbdbd;transform:translate(-50%,-50%);">45</div>
<div class="t" style="left:542.0px;top:429.4px;font-size:5.4px;color:#bdbdbd;transform:translate(-50%,-50%);">50</div>
<div class="t" style="left:580.7px;top:429.4px;font-size:5.4px;color:#bdbdbd;transform:translate(-50%,-50%);">55</div>
<div class="t" style="left:619.4000000000001px;top:429.4px;font-size:5.4px;color:#bdbdbd;transform:translate(-50%,-50%);">60</div>
<div class="r" style="left:255.5px;top:431px;width:1px;height:44px;background:#4772b3;"></div>
<div class="r" style="left:250px;top:422.5px;width:12px;height:9px;background:#4772b3;border-radius:2px;"></div>
<div class="t" style="left:256px;top:429.09999999999997px;font-size:5.4px;color:#ffffff;transform:translate(-50%,-50%);">13</div>
<div class="r" style="left:658px;top:432px;width:1.5px;height:38px;background:#444;"></div>
<div class="r" style="left:662px;top:12px;width:138px;height:149.5px;background:#282828;"></div>
<div class="r" style="left:662px;top:12px;width:138px;height:12px;background:#232323;"></div>
<svg width="800" height="478" viewBox="0 0 800 478"><g fill="#d8d8d8"><rect x="667" y="14" width="1.2" height="7"/><rect x="669" y="15" width="3" height="1.2"/><rect x="669" y="18" width="3" height="1.2"/><rect x="669" y="20" width="3" height="1.2"/></g><path d="M675,17 l1.2,1.2 l1.2,-1.2" stroke="#bbb" fill="none" stroke-width="0.7"/></svg>
<svg width="800" height="478" viewBox="0 0 800 478"><g fill="#d8d8d8"><path d="M685,21 l2,-6 l3,3 z"/><circle cx="689" cy="18" r="2"/></g><path d="M692,17 l1.2,1.2 l1.2,-1.2" stroke="#bbb" fill="none" stroke-width="0.7"/></svg>
<div class="r" style="left:704px;top:13px;width:53px;height:9px;background:#1a1a1a;border-radius:3px;"></div>
<svg width="800" height="478" viewBox="0 0 800 478"><circle cx="709" cy="16.8" r="1.8" stroke="#ccc" stroke-width="0.8" fill="none"/><path d="M707.8,18 l-1.8,1.8" stroke="#ccc" stroke-width="0.8"/></svg>
<div class="t" style="left:715px;top:19.7px;font-size:5.4px;color:#5a5a5a;transform:translate(0,-50%);">Search</div>
<svg width="800" height="478" viewBox="0 0 800 478"><path d="M772,14.5 h6 l-2.2,3 v3 l-1.6,0 v-3 z" stroke="#ccc" stroke-width="0.7" fill="none"/><path d="M781,17 l1.2,1.2 l1.2,-1.2" stroke="#bbb" fill="none" stroke-width="0.7"/></svg>
<div class="r" style="left:789px;top:13px;width:9px;height:9px;background:#555;border-radius:1px;"></div>
<svg width="800" height="478" viewBox="0 0 800 478"><g><rect x="672" y="26" width="6" height="6" fill="#e0e0e0" rx="0.5"/><rect x="673" y="28" width="4" height="3" fill="#444"/></g></svg>
<div class="t" style="left:681.5px;top:30.9px;font-size:5.4px;color:#dadada;transform:translate(0,-50%);">Scene Collection</div>
<svg width="800" height="478" viewBox="0 0 800 478"><path d="M674.5,36.5 l1.5,1.5 l-1.5,1.5" stroke="#aaa" stroke-width="0.7" fill="none"/></svg>
<svg width="800" height="478" viewBox="0 0 800 478"><g><rect x="681" y="35" width="6" height="6" fill="#e0e0e0" rx="0.5"/><rect x="682" y="37" width="4" height="3" fill="#444"/></g></svg>
<div class="t" style="left:690px;top:39.9px;font-size:5.4px;color:#d8d8d8;transform:translate(0,-50%);">Objects</div>
<svg width="800" height="478" viewBox="0 0 800 478"><path d="M719.5,41 l2.5,-3.5 l2.5,3.5 M722,37.5 l0,-3" stroke="#e08030" stroke-width="1.1" fill="none"/></svg>
<div class="r" style="left:727px;top:34px;width:10px;height:8px;background:#555;border-radius:1px;"></div>
<svg width="800" height="478" viewBox="0 0 800 478"><path d="M729,41 l1.5,-5.5 l2,3 l2,-3 l1.5,5.5" stroke="#e08030" stroke-width="1" fill="none"/></svg>
<svg width="800" height="478" viewBox="0 0 800 478"><rect x="770.5" y="35.5" width="5" height="5" fill="#e0e0e0" rx="0.5"/><path d="M771.5,38 l1.2,1.2 l2,-2.2" stroke="#333" stroke-width="0.8" fill="none"/></svg>
<svg width="800" height="478" viewBox="0 0 800 478"><ellipse cx="781" cy="38" rx="3" ry="2" stroke="#ddd" stroke-width="0.8" fill="none"/><circle cx="781" cy="38" r="1" fill="#ddd"/></svg>
<svg width="800" height="478" viewBox="0 0 800 478"><rect x="788.5" y="36" width="5.5" height="4.5" fill="#ddd" rx="0.5"/><circle cx="791.2" cy="38.3" r="1.3" fill="#333"/></svg>
<svg width="800" height="478" viewBox="0 0 800 478"><path d="M674.5,45.5 l1.5,1.5 l-1.5,1.5" stroke="#aaa" stroke-width="0.7" fill="none"/></svg>
<svg width="800" height="478" viewBox="0 0 800 478"><g><rect x="681" y="44" width="6" height="6" fill="#e0e0e0" rx="0.5"/><rect x="682" y="46" width="4" height="3" fill="#444"/></g></svg>
<div class="t" style="left:690px;top:48.9px;font-size:5.4px;color:#d8d8d8;transform:translate(0,-50%);">Lights</div>
<svg width="800" height="478" viewBox="0 0 800 478"><circle cx="717" cy="46.2" r="2.4" fill="#e08030"/><rect x="716" y="48.2" width="2" height="2" fill="#e08030"/><text x="719.5" y="50.5" font-size="3.5" fill="#ccc" font-family="Liberation Sans">5</text></svg>
<svg width="800" height="478" viewBox="0 0 800 478"><rect x="770.5" y="44.5" width="5" height="5" fill="#e0e0e0" rx="0.5"/><path d="M771.5,47 l1.2,1.2 l2,-2.2" stroke="#333" stroke-width="0.8" fill="none"/></svg>
<svg width="800" height="478" viewBox="0 0 800 478"><ellipse cx="781" cy="47" rx="3" ry="2" stroke="#ddd" stroke-width="0.8" fill="none"/><circle cx="781" cy="47" r="1" fill="#ddd"/></svg>
<svg width="800" height="478" viewBox="0 0 800 478"><rect x="788.5" y="45" width="5.5" height="4.5" fill="#ddd" rx="0.5"/><circle cx="791.2" cy="47.3" r="1.3" fill="#333"/></svg>
<svg width="800" height="478" viewBox="0 0 800 478"><path d="M674.5,55.0 l1.5,1.5 l-1.5,1.5" stroke="#aaa" stroke-width="0.7" fill="none"/></svg>
<svg width="800" height="478" viewBox="0 0 800 478"><g><rect x="681" y="53.5" width="6" height="6" fill="#e0e0e0" rx="0.5"/><rect x="682" y="55.5" width="4" height="3" fill="#444"/></g></svg>
<div class="t" style="left:690px;top:58.4px;font-size:5.4px;color:#d8d8d8;transform:translate(0,-50%);">Cameras</div>
<svg width="800" height="478" viewBox="0 0 800 478"><path d="M721.5,59.5 l2.5,-3.5 l2.5,3.5 M724,56.0 l0,-3" stroke="#e08030" stroke-width="1.1" fill="none"/></svg>
<svg width="800" height="478" viewBox="0 0 800 478"><g fill="#e08030"><circle cx="732.5" cy="55.0" r="1.8"/><circle cx="735.5" cy="55.0" r="1.5"/><rect x="731" y="56.5" width="5" height="3"/></g></svg>
<svg width="800" height="478" viewBox="0 0 800 478"><rect x="770.5" y="54.0" width="5" height="5" fill="#e0e0e0" rx="0.5"/><path d="M771.5,56.5 l1.2,1.2 l2,-2.2" stroke="#333" stroke-width="0.8" fill="none"/></svg>
<svg width="800" height="478" viewBox="0 0 800 478"><ellipse cx="781" cy="56.5" rx="3" ry="2" stroke="#ddd" stroke-width="0.8" fill="none"/><circle cx="781" cy="56.5" r="1" fill="#ddd"/></svg>
<svg width="800" height="478" viewBox="0 0 800 478"><rect x="788.5" y="54.5" width="5.5" height="4.5" fill="#ddd" rx="0.5"/><circle cx="791.2" cy="56.8" r="1.3" fill="#333"/></svg>
<div class="r" style="left:662px;top:162.5px;width:138px;height:315.5px;background:#2b2b2b;"></div>
<div class="r" style="left:662px;top:162.5px;width:138px;height:12px;background:#2a2a2a;"></div>
<svg width="800" height="478" viewBox="0 0 800 478"><g fill="#e0e0e0"><rect x="665" y="164.5" width="7" height="3.5" rx="0.8"/><rect x="665" y="168.8" width="7" height="3.5" rx="0.8"/></g><path d="M674,168 l1.2,1.2 l1.2,-1.2" stroke="#bbb" fill="none" stroke-width="0.7"/></svg>
<div class="r" style="left:704px;top:163.5px;width:52px;height:9px;background:#1c1c1c;border-radius:3px;"></div>
<svg width="800" height="478" viewBox="0 0 800 478"><circle cx="709" cy="167.5" r="1.8" stroke="#ccc" stroke-width="0.8" fill="none"/><path d="M707.8,168.7 l-1.8,1.8" stroke="#ccc" stroke-width="0.8"/></svg>
<div class="t" style="left:715px;top:170.20000000000002px;font-size:5.4px;color:#5a5a5a;transform:translate(0,-50%);">Search</div>
<svg width="800" height="478" viewBox="0 0 800 478"><path d="M790.8,167.8 l1.2,1.2 l1.2,-1.2" stroke="#bbb" fill="none" stroke-width="0.7"/></svg>
<div class="r" style="left:662px;top:175px;width:14px;height:303px;background:#1e1e1e;"></div>
<div class="r" style="left:662px;top:207px;width:14px;height:12.5px;background:#333333;"></div>
<svg width="800" height="478" viewBox="0 0 800 478"><g fill="#e2e2e2"><rect x="666" y="181.5" width="1.6" height="6"/><path d="M669,181.5 l1.5,2.5 l1.5,-2.5 h1 l-2,3.3 v2.7 h-1 v-2.7 l-2,-3.3z"/></g></svg>
<svg width="800" height="478" viewBox="0 0 800 478"><g fill="#e2e2e2"><rect x="665.5" y="197" width="7" height="5.5" rx="1"/><rect x="667" y="196" width="4" height="1.5"/></g><rect x="667" y="198.5" width="4" height="2.5" fill="#333"/></svg>
<svg width="800" height="478" viewBox="0 0 800 478"><g fill="#e2e2e2"><rect x="665" y="211" width="8" height="3.5" rx="0.6"/><rect x="666.5" y="209" width="5" height="2"/><rect x="666.5" y="214.5" width="5" height="2.5"/></g></svg>
<svg width="800" height="478" viewBox="0 0 800 478"><g fill="#e2e2e2"><rect x="665.5" y="223" width="6.5" height="5" rx="0.6"/></g><path d="M666.5,227 l2,-2 l1.5,1.2 l1,-0.8 v1.6z" fill="#555"/><circle cx="671" cy="224.5" r="1" fill="#4a8ae0"/></svg>
<svg width="800" height="478" viewBox="0 0 800 478"><g fill="#e2e2e2"><path d="M665,241.5 l2.5,-5.5 l2.5,5.5z"/><circle cx="671" cy="239.5" r="2"/></g></svg>
<svg width="800" height="478" viewBox="0 0 800 478"><circle cx="669" cy="250" r="3" fill="#c33"/><path d="M667,248 q2,1 1,3 M670,247.5 q-0.5,2 1.5,2.5" stroke="#eee" stroke-width="0.7" fill="none"/></svg>
<svg width="800" height="478" viewBox="0 0 800 478"><rect x="666.5" y="262.5" width="5" height="5" fill="#e07020" transform="rotate(0 669 265)"/><rect x="668" y="264" width="2" height="2" fill="#ffb070"/></svg>
<svg width="800" height="478" viewBox="0 0 800 478"><path d="M666,282 l3.5,-3.5 m0,0 a1.6,1.6 0 1 1 1.8,-1.8" stroke="#4a8ae0" stroke-width="1.3" fill="none"/></svg>
<svg width="800" height="478" viewBox="0 0 800 478"><g stroke="#4a8ae0" stroke-width="1" fill="none"><path d="M666,288.5 l6,6 M672,288.5 l-6,6"/></g><circle cx="669" cy="291.5" r="1" fill="#4a8ae0"/></svg>
<svg width="800" height="478" viewBox="0 0 800 478"><circle cx="669" cy="304" r="2.8" stroke="#4a8ae0" stroke-width="1" fill="none"/><circle cx="669" cy="304" r="1.2" fill="#4a8ae0"/></svg>
<svg width="800" height="478" viewBox="0 0 800 478"><g stroke="#4a8ae0" stroke-width="1.1" fill="none"><circle cx="667.5" cy="316" r="1.8"/><circle cx="670.5" cy="314" r="1.8"/></g></svg>
<svg width="800" height="478" viewBox="0 0 800 478"><path d="M666,325.5 l3,5.5 l3,-5.5z" stroke="#4a8ae0" stroke-width="1" fill="none"/><circle cx="669" cy="331" r="1" fill="#4a8ae0"/></svg>
<svg width="800" height="478" viewBox="0 0 800 478"><circle cx="669" cy="341.6" r="3" fill="#c83a3a"/><path d="M667.3,340.5 a2,2 0 0 1 2.5,-1.2" stroke="#f0a0a0" stroke-width="0.8" fill="none"/></svg>
<svg width="800" height="478" viewBox="0 0 800 478"><g fill="#ddd"><path d="M681,186 l2.5,-6 l2.5,6 z"/><circle cx="686" cy="184.5" r="2"/></g></svg>
<div class="t" style="left:691px;top:184.9px;font-size:5.4px;color:#d8d8d8;transform:translate(0,-50%);">Scene</div>
<svg width="800" height="478" viewBox="0 0 800 478"><path d="M789,186.5 l2.5,-2.5 m-1.2,-2.5 l3,3 m-0.6,-3.6 l-2.6,2.6" stroke="#999" stroke-width="0.9" fill="none"/></svg>
<div class="r" style="left:678px;top:191px;width:119px;height:156px;background:#333333;border-radius:3px;"></div>
<div class="r" style="left:678px;top:347.5px;width:119px;height:13px;background:#333333;border-radius:3px;"></div>
<div class="r" style="left:678px;top:361px;width:119px;height:117px;background:#333333;border-radius:3px 3px 0 0;"></div>
<svg width="800" height="478" viewBox="0 0 800 478"><path d="M682.5,197.2 l1.5,1.5 l1.5,-1.5" stroke="#ccc" fill="none" stroke-width="0.8"/></svg>
<div class="t" style="left:688.5px;top:199.9px;font-size:5.4px;color:#dcdcdc;transform:translate(0,-50%);">Format</div>
<svg width="800" height="478" viewBox="0 0 800 478"><g fill="#bbb"><rect x="776" y="195" width="1" height="6"/><rect x="778" y="195.5" width="3" height="1"/><rect x="778" y="198" width="3" height="1"/><rect x="778" y="200.5" width="3" height="1"/><circle cx="789" cy="198" r="0.5"/><circle cx="791" cy="198" r="0.5"/></g></svg>
<div class="r" style="left:729px;top:206.5px;width:63px;height:28.200000000000003px;background:#545454;border-radius:2px;"></div>
<div class="t" style="left:760.5px;top:213.1px;font-size:5.4px;color:#e0e0e0;transform:translate(-50%,-50%);">1920 px</div>
<div class="t" style="left:760.5px;top:222.5px;font-size:5.4px;color:#e0e0e0;transform:translate(-50%,-50%);">1080 px</div>
<div class="r" style="left:729px;top:225.3px;width:63px;height:9.4px;background:#4772b3;border-radius:1px;"></div>
<div class="t" style="left:760.5px;top:231.9px;font-size:5.4px;color:#e0e0e0;transform:translate(-50%,-50%);">100%</div>
<div class="t" style="left:724px;top:213.1px;font-size:5.4px;color:#cfcfcf;transform:translate(-100%,-50%);">Resolution X</div>
<div class="t" style="left:724px;top:222.5px;font-size:5.4px;color:#cfcfcf;transform:translate(-100%,-50%);">Y</div>
<div class="t" style="left:724px;top:231.9px;font-size:5.4px;color:#cfcfcf;transform:translate(-100%,-50%);">%</div>
<div class="r" style="left:729px;top:235.5px;width:63px;height:18.8px;background:#545454;border-radius:2px;"></div>
<div class="t" style="left:760.5px;top:242.1px;font-size:5.4px;color:#e0e0e0;transform:translate(-50%,-50%);">1.000</div>
<div class="t" style="left:760.5px;top:251.5px;font-size:5.4px;color:#e0e0e0;transform:translate(-50%,-50%);">1.000</div>
<div class="t" style="left:724px;top:242.1px;font-size:5.4px;color:#cfcfcf;transform:translate(-100%,-50%);">Aspect X</div>
<div class="t" style="left:724px;top:251.5px;font-size:5.4px;color:#cfcfcf;transform:translate(-100%,-50%);">Y</div>
<div class="r" style="left:729.5px;top:258.5px;width:5px;height:5px;background:#4772b3;border-radius:1px;"></div>
<svg width="800" height="478" viewBox="0 0 800 478"><path d="M730.4,261 l1.2,1.2 l2,-2.3" stroke="#fff" stroke-width="0.9" fill="none"/></svg>
<div class="t" style="left:736px;top:262.9px;font-size:5.4px;color:#d8d8d8;transform:translate(0,-50%);">Render Region</div>
<div class="r" style="left:729.5px;top:267.5px;width:5px;height:5px;background:#545454;border-radius:1px;"></div>
<div class="t" style="left:736px;top:271.9px;font-size:5.4px;color:#d8d8d8;transform:translate(0,-50%);">Crop to Render Regi...</div>
<div class="r" style="left:729px;top:277px;width:63px;height:9px;background:#282828;border-radius:2px;"></div>
<div class="t" style="left:724px;top:283.4px;font-size:5.4px;color:#cfcfcf;transform:translate(-100%,-50%);">Frame Rate</div>
<div class="t" style="left:732px;top:283.4px;font-size:5.4px;color:#dcdcdc;transform:translate(0,-50%);">25 fps</div>
<svg width="800" height="478" viewBox="0 0 800 478"><path d="M786.5,280.7 l1.5,1.5 l1.5,-1.5" stroke="#ccc" fill="none" stroke-width="0.8"/></svg>
<svg width="800" height="478" viewBox="0 0 800 478"><path d="M682.5,295.7 l1.5,1.5 l1.5,-1.5" stroke="#ccc" fill="none" stroke-width="0.8"/></svg>
<div class="t" style="left:688.5px;top:298.4px;font-size:5.4px;color:#dcdcdc;transform:translate(0,-50%);">Frame Range</div>
<svg width="800" height="478" viewBox="0 0 800 478"><g fill="#888"><circle cx="789" cy="296.5" r="0.5"/><circle cx="791" cy="296.5" r="0.5"/></g></svg>
<div class="r" style="left:729px;top:305px;width:63px;height:27px;background:#545454;border-radius:2px;"></div>
<div class="t" style="left:724px;top:311.4px;font-size:5.4px;color:#cfcfcf;transform:translate(-100%,-50%);">Frame Start</div>
<div class="t" style="left:760.5px;top:311.4px;font-size:5.4px;color:#e0e0e0;transform:translate(-50%,-50%);">1</div>
<div class="t" style="left:724px;top:320.4px;font-size:5.4px;color:#cfcfcf;transform:translate(-100%,-50%);">End</div>
<div class="t" style="left:760.5px;top:320.4px;font-size:5.4px;color:#e0e0e0;transform:translate(-50%,-50%);">33</div>
<div class="t" style="left:724px;top:329.4px;font-size:5.4px;color:#cfcfcf;transform:translate(-100%,-50%);">Step</div>
<div class="t" style="left:760.5px;top:329.4px;font-size:5.4px;color:#e0e0e0;transform:translate(-50%,-50%);">1</div>
<svg width="800" height="478" viewBox="0 0 800 478"><path d="M690.2,340.5 l1.5,1.5 l-1.5,1.5" stroke="#ccc" fill="none" stroke-width="0.8"/></svg>
<div class="t" style="left:694.5px;top:343.9px;font-size:5.4px;color:#d8d8d8;transform:translate(0,-50%);">Time Stretching</div>
<svg width="800" height="478" viewBox="0 0 800 478"><path d="M683.2,352.5 l1.5,1.5 l-1.5,1.5" stroke="#ccc" fill="none" stroke-width="0.8"/></svg>
<div class="r" style="left:689px;top:351.5px;width:5px;height:5px;background:#555;border-radius:1px;"></div>
<div class="t" style="left:695.5px;top:355.9px;font-size:5.4px;color:#d8d8d8;transform:translate(0,-50%);">Stereoscopy</div>
<svg width="800" height="478" viewBox="0 0 800 478"><g fill="#888"><circle cx="789" cy="354" r="0.5"/><circle cx="791" cy="354" r="0.5"/></g></svg>
<svg width="800" height="478" viewBox="0 0 800 478"><path d="M682.5,365.2 l1.5,1.5 l1.5,-1.5" stroke="#ccc" fill="none" stroke-width="0.8"/></svg>
<div class="t" style="left:688.5px;top:367.9px;font-size:5.4px;color:#dcdcdc;transform:translate(0,-50%);">Output</div>
<div class="r" style="left:683.5px;top:375px;width:98.5px;height:8.5px;background:#1e1e1e;border-radius:2px;"></div>
<div class="t" style="left:686px;top:381.2px;font-size:4.9px;color:#d0d0d0;transform:translate(0,-50%);">//\\_14_ren\\16\\06...\\\\100\\v0.2_####.tiff</div>
<div class="r" style="left:784px;top:375.5px;width:7px;height:7px;background:#cfcfcf;border-radius:0.5px;"></div>
<div class="t" style="left:724px;top:392.9px;font-size:5.4px;color:#cfcfcf;transform:translate(-100%,-50%);">Saving</div>
<div class="r" style="left:729.0px;top:388.5px;width:5px;height:5px;background:#4772b3;border-radius:1px;"></div>
<svg width="800" height="478" viewBox="0 0 800 478"><path d="M729.9,391 l1.2,1.2 l2,-2.3" stroke="#fff" stroke-width="0.9" fill="none"/></svg>
<div class="t" style="left:736px;top:392.9px;font-size:5.4px;color:#d8d8d8;transform:translate(0,-50%);">File Extensions</div>
<div class="r" style="left:729.0px;top:398.0px;width:5px;height:5px;background:#545454;border-radius:1px;"></div>
<div class="t" style="left:736px;top:402.4px;font-size:5.4px;color:#d8d8d8;transform:translate(0,-50%);">Cache Result</div>
<div class="r" style="left:729px;top:408px;width:63px;height:9px;background:#282828;border-radius:2px;"></div>
<div class="t" style="left:724px;top:413.9px;font-size:5.4px;color:#cfcfcf;transform:translate(-100%,-50%);">File Format</div>
<div class="r" style="left:731px;top:409.5px;width:5px;height:5.5px;background:#cfcfcf;"></div>
<div class="t" style="left:740px;top:414.2px;font-size:5.4px;color:#dcdcdc;transform:translate(0,-50%);">TIFF</div>
<svg width="800" height="478" viewBox="0 0 800 478"><path d="M786.5,411.2 l1.5,1.5 l1.5,-1.5" stroke="#ccc" fill="none" stroke-width="0.8"/></svg>
<div class="r" style="left:729px;top:417.5px;width:63px;height:9px;background:#545454;border-radius:2px;"></div>
<div class="r" style="left:750px;top:417.5px;width:21px;height:9px;background:#4772b3;"></div>
<div class="t" style="left:724px;top:423.9px;font-size:5.4px;color:#cfcfcf;transform:translate(-100%,-50%);">Color</div>
<div class="t" style="left:739.5px;top:423.9px;font-size:5.4px;color:#dcdcdc;transform:translate(-50%,-50%);">BW</div>
<div class="t" style="left:760.5px;top:423.9px;font-size:5.4px;color:#ffffff;transform:translate(-50%,-50%);">RGB</div>
<div class="t" style="left:781.5px;top:423.9px;font-size:5.4px;color:#dcdcdc;transform:translate(-50%,-50%);">RGBA</div>
<div class="r" style="left:729px;top:427.5px;width:63px;height:9px;background:#545454;border-radius:2px;"></div>
<div class="r" style="left:761px;top:427.5px;width:31px;height:9px;background:#4772b3;border-radius:0 2px 2px 0;"></div>
<div class="t" style="left:724px;top:433.9px;font-size:5.4px;color:#cfcfcf;transform:translate(-100%,-50%);">Color Depth</div>
<div class="t" style="left:745px;top:433.9px;font-size:5.4px;color:#dcdcdc;transform:translate(-50%,-50%);">8</div>
<div class="t" style="left:776.5px;top:433.9px;font-size:5.4px;color:#ffffff;transform:translate(-50%,-50%);">16</div>
<div class="r" style="left:729px;top:437.5px;width:63px;height:9px;background:#282828;border-radius:2px;"></div>
<div class="t" style="left:724px;top:443.9px;font-size:5.4px;color:#cfcfcf;transform:translate(-100%,-50%);">Compression</div>
<div class="t" style="left:732px;top:443.9px;font-size:5.4px;color:#dcdcdc;transform:translate(0,-50%);">Deflate</div>
<svg width="800" height="478" viewBox="0 0 800 478"><path d="M786.5,441.2 l1.5,1.5 l1.5,-1.5" stroke="#ccc" fill="none" stroke-width="0.8"/></svg>
<div class="t" style="left:724px;top:454.9px;font-size:5.4px;color:#cfcfcf;transform:translate(-100%,-50%);">Image Sequence</div>
<div class="r" style="left:729.0px;top:450.5px;width:5px;height:5px;background:#4772b3;border-radius:1px;"></div>
<svg width="800" height="478" viewBox="0 0 800 478"><path d="M729.9,453 l1.2,1.2 l2,-2.3" stroke="#fff" stroke-width="0.9" fill="none"/></svg>
<div class="t" style="left:736px;top:454.9px;font-size:5.4px;color:#d8d8d8;transform:translate(0,-50%);">Overwrite</div>
<div class="r" style="left:729.0px;top:460.5px;width:5px;height:5px;background:#545454;border-radius:1px;"></div>
<div class="t" style="left:736px;top:464.9px;font-size:5.4px;color:#d8d8d8;transform:translate(0,-50%);">Placeholders</div>
<svg width="800" height="478" viewBox="0 0 800 478"><path d="M690.2,474.5 l1.5,1.5 l-1.5,1.5" stroke="#ccc" fill="none" stroke-width="0.8"/></svg>
<div class="t" style="left:694.5px;top:477.9px;font-size:5.4px;color:#d8d8d8;transform:translate(0,-50%);">Color Management</div>
<div class="r" style="left:797.5px;top:175px;width:1.5px;height:300px;background:#3a3a3a;"></div>
</body></html>
